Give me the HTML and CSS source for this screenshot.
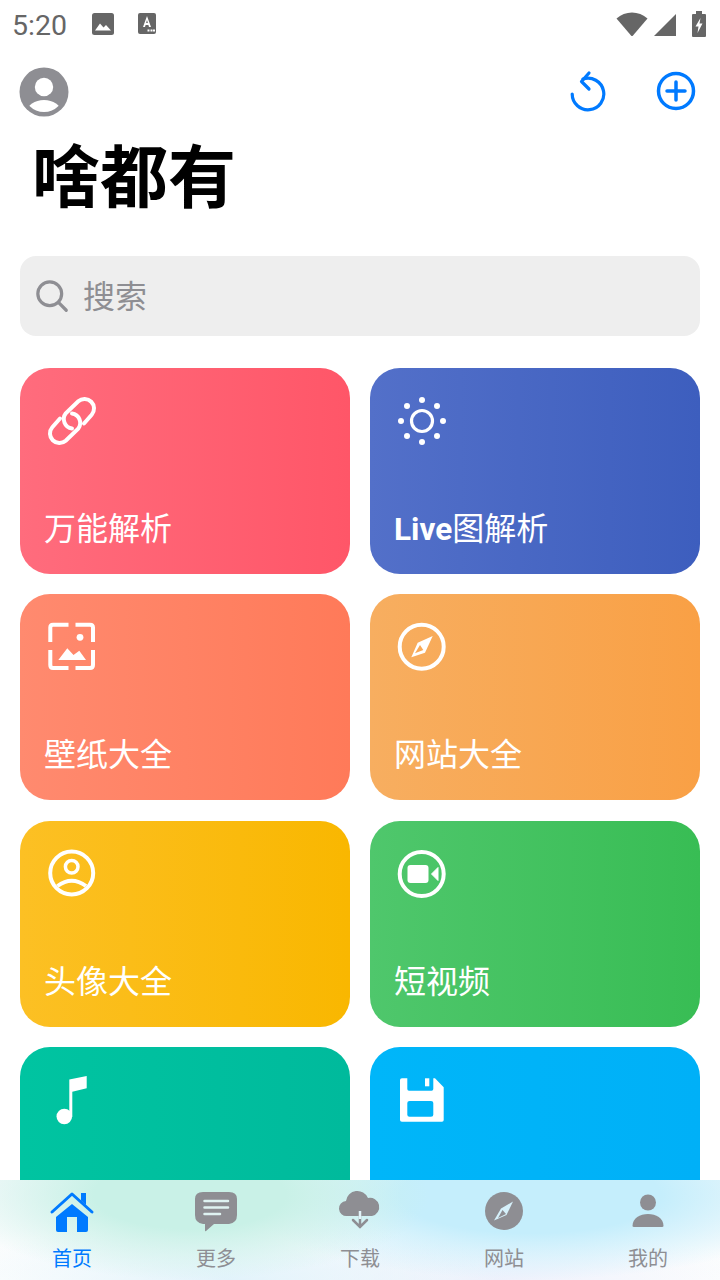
FILE: index.html
```html
<!DOCTYPE html>
<html lang="zh">
<head>
    <meta charset="UTF-8">
    <meta name="viewport" content="width=device-width, initial-scale=1.0">
    <title>啥都有</title>
    <link rel="stylesheet" href="styles.css">
</head>
<body>
    <div class="page">
        <!-- status bar -->
        <div class="status-bar">
            <span class="clock">5:20</span>
            <svg class="notify-img" width="24" height="24" viewBox="0 0 24 24">
                <rect x="1" y="1" width="22" height="22" rx="2.5" fill="#666"/>
                <path d="M4 18.5L9 11.5L12.5 15.5L15 13L20 18.5Z" fill="#fff"/>
            </svg>
            <svg class="notify-a" width="20" height="24" viewBox="0 0 20 24">
                <rect x="1" y="1" width="18" height="21" rx="2" fill="#666"/>
                <path d="M6 15L10 4L14 15H12L11.4 13H8.6L8 15ZM9.1 11H10.9L10 8Z" fill="#fff"/>
                <path d="M10.5 17.5h2v2h-2zM13.5 17.5h2v2h-2zM16 17.5h2v2h-2z" fill="#fff"/>
            </svg>
            <div class="status-right">
                <svg width="32" height="26" viewBox="0 0 32 26">
                    <path d="M0.5 7.5C9 -0.5 23 -0.5 31.5 7.5L17 24.5Q16 25.5 15 24.5Z" fill="#666"/>
                </svg>
                <svg width="22" height="24" viewBox="0 0 22 24">
                    <path d="M0 24L22 2V24Z" fill="#666"/>
                </svg>
                <svg width="14" height="26" viewBox="0 0 14 26">
                    <path d="M4 0H10V3H13Q14 3 14 4V25Q14 26 13 26H1Q0 26 0 25V4Q0 3 1 3H4Z" fill="#666"/>
                    <path d="M8.5 7L3.5 15.5H6.5L5.5 22L10.5 12.5H7.5Z" fill="#fff"/>
                </svg>
            </div>
        </div>

        <div class="top-bar">
            <svg width="50" height="50" viewBox="0 0 50 50">
                <defs>
                    <clipPath id="avatarClip"><circle cx="25" cy="24.5" r="20.5"/></clipPath>
                </defs>
                <circle cx="25" cy="25" r="24.5" fill="#8e8e93"/>
                <circle cx="25" cy="20" r="9.2" fill="#fff"/>
                <ellipse cx="25" cy="45" rx="17" ry="12" fill="#fff" clip-path="url(#avatarClip)"/>
            </svg>
            <div class="top-actions">
                <svg class="btn-refresh" width="40" height="44" viewBox="0 0 40 44" fill="none" stroke="#007aff" stroke-width="3.2" stroke-linecap="round" stroke-linejoin="round">
                    <path d="M15 11A15.8 15.8 0 1 1 4.2 26"/>
                    <path d="M21 5L13.5 13.5L21 21"/>
                </svg>
                <svg class="btn-add" width="40" height="40" viewBox="0 0 40 40" fill="none" stroke="#007aff" stroke-width="3.5" stroke-linecap="round">
                    <circle cx="20" cy="20" r="17.5"/>
                    <path d="M20 11V29M11 20H29"/>
                </svg>
            </div>
        </div>

        <h1 class="title">啥都有</h1>

        <div class="search">
            <svg width="33" height="33" viewBox="0 0 36 36" fill="none" stroke="#8e8e93" stroke-width="3.5" stroke-linecap="round">
                <circle cx="15" cy="15" r="13"/>
                <path d="M24.5 24.5L33 33"/>
            </svg>
            <span>搜索</span>
        </div>

        <div class="content">
            <div class="grid">
                <div class="card card-pink">
                    <svg class="card-icon" width="52" height="52" viewBox="0 0 52 52" fill="none" stroke="#fff" stroke-width="4" stroke-linecap="round">
                        <path d="M38 28.5L45.7 19.7A9.5 9.5 0 0 0 32.3 6.3L19.8 18.3A9.5 9.5 0 0 0 26 33.5"/>
                        <path d="M14 23.5L6.3 32.3A9.5 9.5 0 0 0 19.7 45.7L32.2 33.7A9.5 9.5 0 0 0 26 18.5"/>
                    </svg>
                    <div class="card-name">万能解析</div>
                </div>
                <div class="card card-blue">
                    <svg class="card-icon" width="52" height="52" viewBox="0 0 52 52" fill="#fff">
                        <circle cx="26" cy="26" r="10.5" fill="none" stroke="#fff" stroke-width="3.2"/>
                        <circle cx="26" cy="5" r="3"/>
                        <circle cx="26" cy="47" r="3"/>
                        <circle cx="5" cy="26" r="3"/>
                        <circle cx="47" cy="26" r="3"/>
                        <circle cx="11" cy="11" r="3"/>
                        <circle cx="41" cy="11" r="3"/>
                        <circle cx="11" cy="41" r="3"/>
                        <circle cx="41" cy="41" r="3"/>
                    </svg>
                    <div class="card-name"><span class="latin">Live</span>图解析</div>
                </div>
                <div class="card card-coral">
                    <svg class="card-icon" width="52" height="52" viewBox="0 0 52 52" fill="none" stroke="#fff" stroke-width="4">
                        <path d="M22.5 3.7H7Q4.3 3.7 4.3 6.5V21M29.5 3.7H44Q47 3.7 47 6.5V21M4.3 29V44Q4.3 47 7 47H22.5M47 29V44Q47 47 44 47H29.5"/>
                        <circle cx="34" cy="16.3" r="3.4" fill="#fff" stroke="none"/>
                        <path d="M12.3 39L21.3 27.3L27.5 34L33.3 29.7L40 39Z" fill="#fff" stroke="none"/>
                    </svg>
                    <div class="card-name">壁纸大全</div>
                </div>
                <div class="card card-orange">
                    <svg class="card-icon" width="52" height="52" viewBox="0 0 52 52" fill="none" stroke="#fff" stroke-width="4">
                        <circle cx="25.7" cy="25.7" r="22"/>
                        <path d="M36.7 15L29 31.7L15.3 36.3L21.7 21.7Z" fill="#fff" stroke="none"/>
                        <path d="M24 24L27.3 29L19 32.3Z" fill="#f8a957" stroke="none"/>
                    </svg>
                    <div class="card-name">网站大全</div>
                </div>
                <div class="card card-yellow">
                    <svg class="card-icon" width="52" height="52" viewBox="0 0 52 52" fill="none" stroke="#fff" stroke-width="4">
                        <circle cx="25.7" cy="25" r="21.5"/>
                        <circle cx="25.7" cy="18.7" r="6.3" stroke-width="3.5"/>
                        <path d="M11.5 38Q25.7 27.5 40 38"/>
                    </svg>
                    <div class="card-name">头像大全</div>
                </div>
                <div class="card card-green">
                    <svg class="card-icon" width="52" height="52" viewBox="0 0 52 52" fill="none" stroke="#fff" stroke-width="4">
                        <circle cx="25.7" cy="26" r="22"/>
                        <rect x="11.5" y="17" width="21" height="18" rx="3" fill="#fff" stroke="none"/>
                        <path d="M35.5 26L42 19.5V32.5Z" fill="#fff" stroke="#fff" stroke-width="1" stroke-linejoin="round"/>
                    </svg>
                    <div class="card-name">短视频</div>
                </div>
                <div class="card card-teal">
                    <svg class="card-icon" width="52" height="52" viewBox="0 0 52 52" fill="#fff">
                        <path d="M23.3 5.5L40.7 2V14.3L26.3 17.7V42.7H23.3Z"/>
                        <circle cx="18.3" cy="42.5" r="7.8"/>
                    </svg>
                </div>
                <div class="card card-sky">
                    <svg class="card-icon" width="52" height="52" viewBox="0 0 52 52" fill="#fff">
                        <path fill-rule="evenodd" d="M6 4.3H11.3V15Q11.3 16.7 13 16.7H35.6Q37.3 16.7 37.3 15V4.3H39L47.7 13.3V46Q47.7 47.7 46 47.7H6Q4 47.7 4 46V6Q4 4.3 6 4.3ZM13.5 27Q11.3 27 11.3 29V40.7Q11.3 42.7 13.5 42.7H35Q37.3 42.7 37.3 40.7V29Q37.3 27 35 27Z"/>
                        <rect x="29" y="4.3" width="4.3" height="8"/>
                    </svg>
                </div>
            </div>
        </div>

        <!-- bottom tabs -->
        <div class="tabbar">
            <div class="tab tab-active">
                <svg width="48" height="44" viewBox="0 0 48 44">
                    <path d="M24 15L40 28V41Q40 43 38 43H29V28H19V43H10Q8 43 8 41V28Z" fill="#007aff"/>
                    <path d="M4 23L24 5L44 23" fill="none" stroke="#007aff" stroke-width="3" stroke-linecap="round" stroke-linejoin="round"/>
                    <path d="M33 4H38V16L33 11.5Z" fill="#007aff"/>
                </svg>
                <span>首页</span>
            </div>
            <div class="tab">
                <svg width="48" height="44" viewBox="0 0 48 44">
                    <path d="M11 3H37Q45 3 45 10V26Q45 34 37 35H22L14 42Q13 43 13 41V35H11Q3 34 3 26V10Q3 3 11 3Z" fill="#8e8e93"/>
                    <path d="M12.5 12H36M12.5 18.5H36M12.5 25H28" stroke="#dff3f2" stroke-width="2.5" stroke-linecap="round"/>
                </svg>
                <span>更多</span>
            </div>
            <div class="tab">
                <svg width="48" height="44" viewBox="0 0 48 44">
                    <path d="M11 27A7.5 7.5 0 0 1 10 12A11.5 11.5 0 0 1 32 9A9 9 0 1 1 36 27Z" fill="#8e8e93"/>
                    <path d="M24 17V38M17 31L24 38L31 31" fill="none" stroke="#8e8e93" stroke-width="2.5" stroke-linecap="round"/>
                    <path d="M24 22V30" stroke="#e2f4fa" stroke-width="2.5"/>
                </svg>
                <span>下载</span>
            </div>
            <div class="tab">
                <svg width="48" height="44" viewBox="0 0 48 44">
                    <circle cx="24" cy="22" r="19" fill="#8e8e93"/>
                    <path d="M33 12.5L26.5 26L14 31.5L21 19.5Z" fill="#d5f0fa"/>
                    <path d="M22.5 21L26 25L18 29Z" fill="#8e8e93"/>
                </svg>
                <span>网站</span>
            </div>
            <div class="tab">
                <svg width="48" height="44" viewBox="0 0 48 44">
                    <circle cx="24" cy="13.5" r="8" fill="#8e8e93"/>
                    <path d="M8.5 37C8.5 29 16 25 24 25C32 25 39.5 29 39.5 37Q39.5 38 38 38H10Q8.5 38 8.5 37Z" fill="#8e8e93"/>
                </svg>
                <span>我的</span>
            </div>
        </div>
    </div>
</body>
</html>
```

FILE: styles.css
```css
body {
    font-family: "Noto Sans CJK SC", "Noto Sans", sans-serif;
    margin: 0;
    padding: 0;
    background-color: #fff;
}

.page {
    width: 720px;
    height: 1280px;
    display: flex;
    flex-direction: column;
    overflow: hidden;
}

.status-bar {
    height: 48px;
    flex-shrink: 0;
    display: flex;
    align-items: center;
    padding: 0 14px 0 12px;
    color: #666;
}

.clock {
    font-family: Roboto, sans-serif;
    font-size: 28.5px;
    width: 79px;
    padding-top: 2px;
}

.notify-a {
    margin-left: 22px;
}

.status-right {
    margin-left: auto;
    display: flex;
    align-items: center;
    gap: 6px;
}

.status-right svg:last-child {
    margin-left: 10px;
}

.top-bar {
    height: 74px;
    flex-shrink: 0;
    display: flex;
    align-items: center;
    justify-content: space-between;
    padding: 14px 24px 0 19px;
    box-sizing: border-box;
}

.top-actions {
    display: flex;
    align-items: center;
    gap: 48px;
}

.btn-refresh {
    margin-bottom: 4px;
}

.btn-add {
    margin-bottom: 2px;
}

.title {
    margin: 9px 0 0 32px;
    height: 125px;
    flex-shrink: 0;
    font-size: 68px;
    line-height: 84px;
    font-weight: 700;
    color: #000;
}

.search {
    margin: 0 20px;
    height: 80px;
    flex-shrink: 0;
    background-color: #eee;
    border-radius: 16px;
    display: flex;
    align-items: center;
    gap: 14px;
    padding-left: 16px;
    color: #8e8e93;
    font-size: 32px;
}

.search span {
    margin-bottom: 4px;
}

.content {
    flex: 1;
    min-height: 0;
    overflow: hidden;
    padding: 32px 20px 0;
}

.grid {
    display: grid;
    grid-template-columns: 330px 330px;
    grid-auto-rows: 206px;
    column-gap: 20px;
    row-gap: 20.33px;
}

.card {
    border-radius: 30px;
    padding: 27px 24px 24px;
    box-sizing: border-box;
    display: flex;
    flex-direction: column;
    justify-content: space-between;
    color: #fff;
}

.card-icon {
    display: block;
    margin-left: 2px;
}

.card-name {
    font-size: 32px;
    line-height: 48px;
    height: 48px;
}

.latin {
    font-family: Roboto, sans-serif;
    font-weight: 700;
    font-size: 31.5px;
    line-height: 1;
}

.card-pink { background: linear-gradient(90deg, #ff6c7d, #ff5668); }
.card-blue { background: linear-gradient(90deg, #5370c9, #3d5ebe); }
.card-coral { background: linear-gradient(90deg, #ff8a6f, #ff7a59); }
.card-orange { background: linear-gradient(90deg, #f7ae60, #f9a045); }
.card-yellow { background: linear-gradient(90deg, #fcc024, #f9b700); }
.card-green { background: linear-gradient(90deg, #4fc76c, #38bd54); }
.card-teal { background: linear-gradient(90deg, #00c4a1, #00ba9c); }
.card-sky { background: linear-gradient(90deg, #00b6f9, #00b0f7); }

.tabbar {
    height: 100px;
    flex-shrink: 0;
    display: flex;
    background:
        radial-gradient(ellipse 240px 85px at 190px 15px, #c9f1e7 40%, rgba(201, 241, 231, 0) 100%),
        radial-gradient(ellipse 290px 85px at 530px 15px, #c5eefc 45%, rgba(197, 238, 252, 0) 100%),
        radial-gradient(ellipse 280px 60px at 230px 100px, #e2f3fb, rgba(226, 243, 251, 0) 100%),
        radial-gradient(ellipse 260px 50px at 500px 100px, #eef1fc, rgba(238, 241, 252, 0) 100%),
        linear-gradient(#f5f9fb, #fdfefe);
}

.tab {
    flex: 1;
    display: flex;
    flex-direction: column;
    align-items: center;
    padding-top: 9px;
    color: #8e8e93;
    font-size: 20px;
    line-height: 30px;
}

.tab svg {
    display: block;
    margin-bottom: 10px;
}

.tab-active {
    color: #007aff;
}
```
